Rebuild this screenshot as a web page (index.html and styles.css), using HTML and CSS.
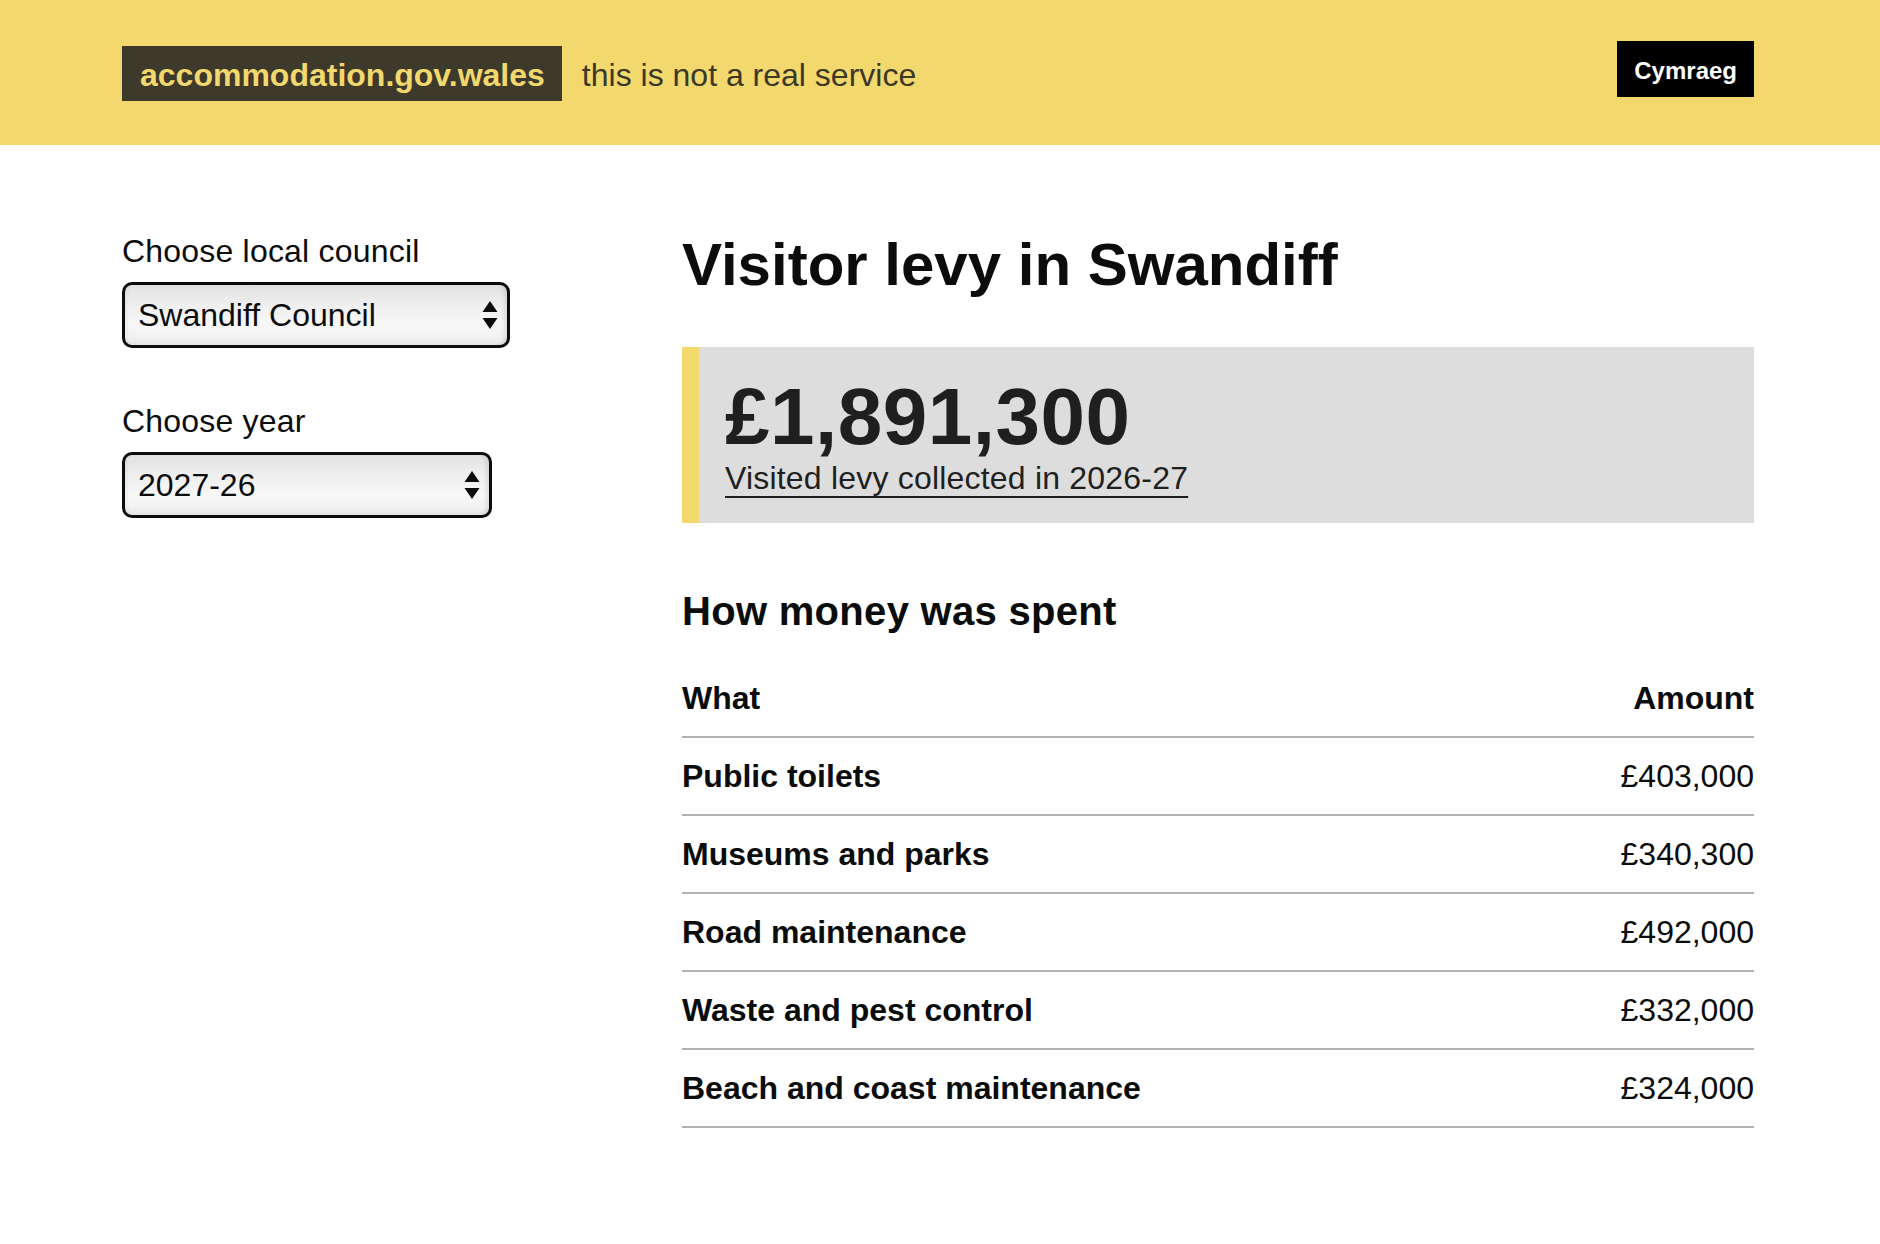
FILE: index.html
```html
<!DOCTYPE html>
<html lang="en">
<head>
<meta charset="utf-8">
<title>Visitor levy in Swandiff</title>
<link rel="stylesheet" href="styles.css">
</head>
<body>
<header class="site-header">
  <div class="container header-inner">
    <div class="brand">
      <a class="logo" href="#">accommodation.gov.wales</a>
      <span class="tagline">this is not a real service</span>
    </div>
    <a class="lang-btn" href="#">Cymraeg</a>
  </div>
</header>
<main class="container layout">
  <aside class="filters">
    <div class="field">
      <label class="field-label" for="council">Choose local council</label>
      <div class="select-wrap select-wrap--council">
        <select id="council" class="select"><option>Swandiff Council</option></select>
        <svg class="select-arrows" width="16" height="28" viewBox="0 0 16 28" aria-hidden="true"><path d="M8 0 L15.5 11 H0.5 Z M0.5 17 H15.5 L8 28 Z" fill="#0b0c0c"/></svg>
      </div>
    </div>
    <div class="field">
      <label class="field-label" for="year">Choose year</label>
      <div class="select-wrap select-wrap--year">
        <select id="year" class="select"><option>2027-26</option></select>
        <svg class="select-arrows" width="16" height="28" viewBox="0 0 16 28" aria-hidden="true"><path d="M8 0 L15.5 11 H0.5 Z M0.5 17 H15.5 L8 28 Z" fill="#0b0c0c"/></svg>
      </div>
    </div>
  </aside>
  <section class="content">
    <h1 class="page-title">Visitor levy in Swandiff</h1>
    <div class="panel">
      <p class="panel-amount">£1,891,300</p>
      <p class="panel-caption">Visited levy collected in 2026-27</p>
    </div>
    <h2 class="section-title">How money was spent</h2>
    <table class="spend-table">
      <thead>
        <tr><th class="col-what">What</th><th class="col-amount">Amount</th></tr>
      </thead>
      <tbody>
        <tr><td class="col-what">Public toilets</td><td class="col-amount">£403,000</td></tr>
        <tr><td class="col-what">Museums and parks</td><td class="col-amount">£340,300</td></tr>
        <tr><td class="col-what">Road maintenance</td><td class="col-amount">£492,000</td></tr>
        <tr><td class="col-what">Waste and pest control</td><td class="col-amount">£332,000</td></tr>
        <tr><td class="col-what">Beach and coast maintenance</td><td class="col-amount">£324,000</td></tr>
      </tbody>
    </table>
  </section>
</main>
</body>
</html>
```

FILE: styles.css
```css
* { box-sizing: border-box; }

html, body {
  margin: 0;
  padding: 0;
  background: #ffffff;
}

body {
  font-family: "Liberation Sans", Arial, Helvetica, sans-serif;
  color: #0b0c0c;
}

.container {
  margin: 0 126px 0 122px;
}

/* Header */
.site-header {
  background: #f3d86e;
  height: 145px;
  padding-top: 41px;
}

.header-inner {
  display: flex;
  justify-content: space-between;
  align-items: flex-start;
}

.brand {
  display: flex;
  align-items: baseline;
  gap: 20px;
  margin-top: 5px;
}

.logo {
  display: block;
  background: #3d3a2b;
  color: #f3d86e;
  font-weight: 700;
  font-size: 32px;
  line-height: 37px;
  padding: 11px 17px 7px 18px;
  text-decoration: none;
}

.tagline {
  font-size: 32px;
  line-height: 37px;
  color: #3b3826;
}

.lang-btn {
  display: block;
  background: #000000;
  color: #ffffff;
  font-weight: 700;
  font-size: 24px;
  line-height: 28px;
  padding: 16px 17px 12px;
  text-decoration: none;
}

/* Layout */
.layout {
  display: grid;
  grid-template-columns: 512px 1fr;
  column-gap: 48px;
  padding-top: 88px;
  padding-bottom: 80px;
}

/* Filters */
.filters {
  display: flex;
  flex-direction: column;
  gap: 55px;
}

.field {
  display: flex;
  flex-direction: column;
  align-items: flex-start;
}

.field-label {
  font-size: 32px;
  line-height: 37px;
  margin-bottom: 12px;
  letter-spacing: 0.2px;
}

.select-wrap {
  position: relative;
}

.select-wrap--council { width: 388px; }
.select-wrap--year { width: 370px; }

.select {
  -webkit-appearance: none;
  appearance: none;
  display: block;
  width: 100%;
  height: 66px;
  margin: 0;
  padding: 0 40px 0 13px;
  font-family: "Liberation Sans", Arial, Helvetica, sans-serif;
  font-size: 32px;
  color: #0b0c0c;
  border: 3px solid #0b0c0c;
  border-radius: 10px;
  background: linear-gradient(to bottom, #e2e2e2 0%, #efefef 35%, #f7f7f7 65%, #f3f3f3 85%, #e6e6e6 100%);
  box-shadow: inset -5px 0 5px -3px rgba(0, 0, 0, 0.12), inset 4px 0 4px -3px rgba(0, 0, 0, 0.08);
}

.select-arrows {
  position: absolute;
  right: 12px;
  top: 19px;
  pointer-events: none;
}

/* Content */
.page-title {
  margin: 0;
  font-size: 60px;
  line-height: 64px;
  font-weight: 700;
}

.panel {
  margin-top: 50px;
  background: #dddddd;
  border-left: 17px solid #f3d86e;
  padding: 30px 24px 26px 26px;
  color: #1f1f1f;
}

.panel-amount {
  margin: 0;
  font-size: 80px;
  line-height: 80px;
  font-weight: 700;
  letter-spacing: 0.5px;
}

.panel-caption {
  margin: 2px 0 0;
  display: inline-block;
  font-size: 32px;
  line-height: 38px;
  text-decoration: underline;
  text-decoration-thickness: 2px;
  text-underline-offset: 7px;
  letter-spacing: 0.2px;
}

.section-title {
  margin: 66px 0 0;
  font-size: 40px;
  line-height: 44px;
  font-weight: 700;
  letter-spacing: 0.3px;
}

.spend-table {
  margin-top: 27px;
  width: 100%;
  border-collapse: collapse;
  font-size: 32px;
}

.spend-table th,
.spend-table td {
  padding: 20px 0;
  line-height: 36px;
  border-bottom: 2px solid #b1b4b6;
}

.spend-table th {
  font-weight: 700;
}

.spend-table .col-what {
  text-align: left;
  font-weight: 700;
}

.spend-table .col-amount {
  text-align: right;
}

.spend-table th.col-amount {
  font-weight: 700;
}

.spend-table td.col-amount {
  font-weight: 400;
}
```
